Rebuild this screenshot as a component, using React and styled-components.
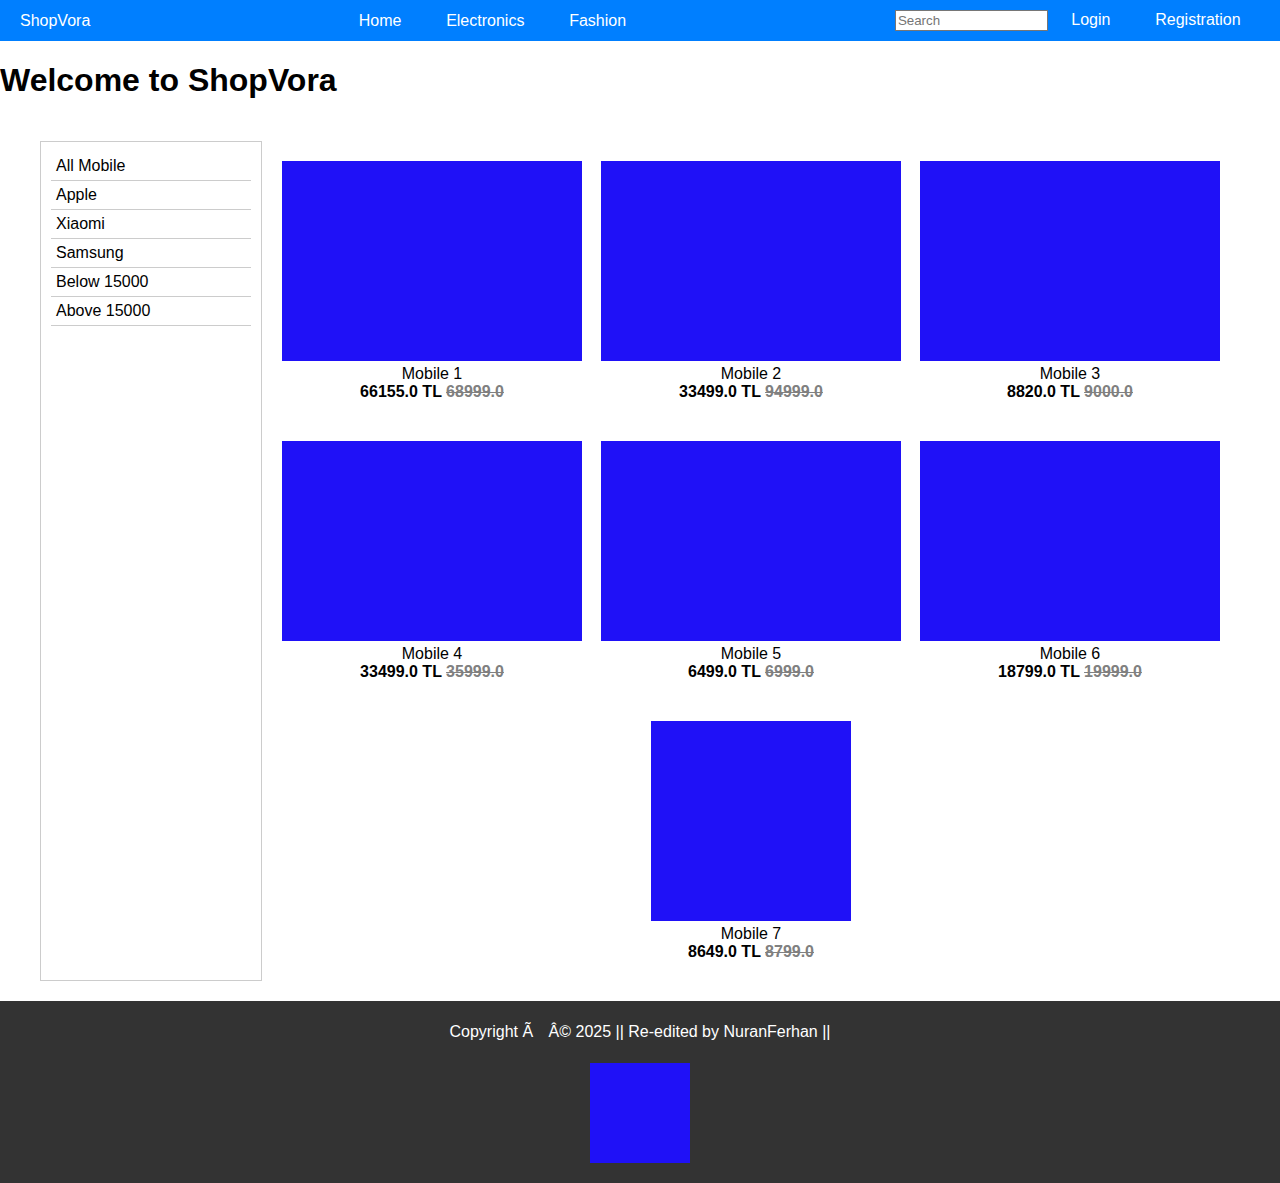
import React from "react";
import styled, { createGlobalStyle } from "styled-components";

const GlobalStyle = createGlobalStyle`
    body {
        margin: 0;
        font-family: "Liberation Sans", Arial, sans-serif;
        color: #000;
        background: #fff;
    }
`;

const products = [
    { name: "Mobile 1", price: "66155.0", old: "68999.0" },
    { name: "Mobile 2", price: "33499.0", old: "94999.0" },
    { name: "Mobile 3", price: "8820.0", old: "9000.0" },
    { name: "Mobile 4", price: "33499.0", old: "35999.0" },
    { name: "Mobile 5", price: "6499.0", old: "6999.0" },
    { name: "Mobile 6", price: "18799.0", old: "19999.0" },
    { name: "Mobile 7", price: "8649.0", old: "8799.0", small: true },
];

const categories = ["All Mobile", "Apple", "Xiaomi", "Samsung", "Below 15000", "Above 15000"];

const App = () => {
    return (
        <>
            <GlobalStyle />
            <Nav>
                <Brand>ShopVora</Brand>
                <Links>
                    <NavLink>Home</NavLink>
                    <NavLink>Electronics</NavLink>
                    <NavLink>Fashion</NavLink>
                </Links>
                <Right>
                    <Search type="text" placeholder="Search" />
                    <NavLink $raised>Login</NavLink>
                    <NavLink $raised>Registration</NavLink>
                </Right>
            </Nav>
            <Title>Welcome to ShopVora</Title>
            <Page>
                <Sidebar>
                    {categories.map((c) => (
                        <Category key={c}>{c}</Category>
                    ))}
                </Sidebar>
                <Products>
                    {products.map((p) => (
                        <Card key={p.name}>
                            <Thumb $small={p.small} />
                            <Name>{p.name}</Name>
                            <Price>
                                {p.price} TL <Old>{p.old}</Old>
                            </Price>
                        </Card>
                    ))}
                </Products>
            </Page>
            <Footer>
                <FooterText>
                    Copyright Ã<Gap />Â© 2025 || Re-edited by NuranFerhan ||
                </FooterText>
                <Logo />
            </Footer>
        </>
    );
};

const Nav = styled.nav`
    display: flex;
    align-items: center;
    height: 41px;
    background: #007fff;
    padding: 0 17px 0 20px;
    color: #fff;
    font-size: 16px;
`;

const Brand = styled.div`
    color: #fff;
`;

const Links = styled.div`
    display: flex;
    margin-left: 246px;
`;

const NavLink = styled.a`
    color: #fff;
    padding: 0 22.4px;
    line-height: 18px;
    margin-bottom: ${(p) => (p.$raised ? "2px" : "0")};
    cursor: pointer;
`;

const Right = styled.div`
    display: flex;
    align-items: center;
    margin-left: auto;
`;

const Search = styled.input`
    box-sizing: border-box;
    width: 153px;
    height: 21px;
    padding: 1px 2px;
    margin-right: 1px;
    border: 1px solid #767676;
    font: 13.333px "Liberation Sans", Arial, sans-serif;
    color: #000;
    &::placeholder {
        color: #757575;
    }
`;

const Title = styled.h1`
    margin: 0.67em 0;
    font-size: 32px;
    font-weight: bold;
`;

const Page = styled.div`
    display: flex;
    align-items: stretch;
    padding: 20px 40px;
`;

const Sidebar = styled.ul`
    list-style: none;
    margin: 0;
    width: 200px;
    padding: 10px;
    border: 1px solid #ccc;
    flex-shrink: 0;
`;

const Category = styled.li`
    padding: 5px;
    line-height: 18px;
    border-bottom: 1px solid #ccc;
`;

const Products = styled.div`
    flex: 1;
    display: flex;
    flex-wrap: wrap;
    justify-content: center;
    align-content: flex-start;
    column-gap: 19px;
    row-gap: 40px;
    padding: 20px;
`;

const Card = styled.div`
    display: flex;
    flex-direction: column;
    align-items: center;
    width: 300px;
    text-align: center;
    line-height: 18px;
`;

const Thumb = styled.div`
    width: ${(p) => (p.$small ? "200px" : "300px")};
    height: 200px;
    margin-bottom: 4px;
    background: #1f11f7;
`;

const Name = styled.div`
    font-size: 16px;
`;

const Price = styled.div`
    font-weight: bold;
    font-size: 16px;
`;

const Old = styled.s`
    color: #808080;
`;

const Footer = styled.footer`
    display: flex;
    flex-direction: column;
    align-items: center;
    background: #333;
    color: #fff;
    padding: 22px 0 20px;
`;

const FooterText = styled.p`
    margin: 0 0 22px;
    line-height: 18px;
`;

const Gap = styled.span`
    display: inline-block;
    width: 15.5px;
`;

const Logo = styled.div`
    width: 100px;
    height: 100px;
    background: #1f11f7;
`;

export default App;
